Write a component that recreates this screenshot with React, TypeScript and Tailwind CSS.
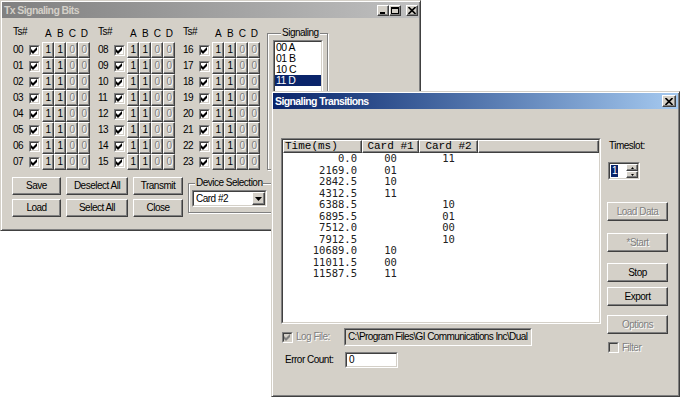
import React from "react";

const UI = "font-['Liberation_Sans',Arial,sans-serif] tracking-[-0.5px]";
const TITLE = "font-bold text-[10.5px] tracking-[-0.6px] leading-none";
const RAISED =
  "bg-[#d4d0c8] border border-t-white border-l-white border-r-[#404040] border-b-[#404040] shadow-[inset_-1px_-1px_0_#808080]";
const SUNKEN_OUT = "border border-t-[#808080] border-l-[#808080] border-r-white border-b-white";
const SUNKEN_IN = "border border-t-[#404040] border-l-[#404040] border-r-[#d4d0c8] border-b-[#d4d0c8]";
const ETCHED = "border border-[#808080] shadow-[inset_1px_1px_0_#fff,1px_1px_0_#fff]";
const DIS = "text-[#808080] [text-shadow:1px_1px_0_#fff]";
const WIN =
  "bg-[#d4d0c8] border border-t-[#d4d0c8] border-l-[#d4d0c8] border-r-[#404040] border-b-[#404040] shadow-[inset_1px_1px_0_#fff,inset_-1px_-1px_0_#808080] p-[1px]";

function Field({
  className,
  bg = "bg-white",
  children,
}: {
  className: string;
  bg?: string;
  children?: React.ReactNode;
}) {
  return (
    <div className={`${SUNKEN_OUT} ${className} shrink-0`}>
      <div className={`${SUNKEN_IN} ${bg} w-full h-full flex items-center overflow-hidden`}>{children}</div>
    </div>
  );
}

function Check({ checked = true, disabled = false }: { checked?: boolean; disabled?: boolean }) {
  return (
    <Field className="w-[11px] h-[11px]" bg={disabled ? "bg-[#d4d0c8]" : "bg-white"}>
      {checked && (
        <svg width="7" height="7" viewBox="0 0 7 7" className="mx-auto">
          <path d="M0 2 L2 4 L6 0 L6 3 L2 7 L0 5 Z" fill={disabled ? "#808080" : "#000"} />
        </svg>
      )}
    </Field>
  );
}

function Btn({
  children,
  className,
  disabled = false,
}: {
  children: React.ReactNode;
  className: string;
  disabled?: boolean;
}) {
  return (
    <div
      className={`${RAISED} ${className} flex items-center justify-center leading-none shrink-0 whitespace-nowrap ${
        disabled ? DIS : "text-black"
      }`}
    >
      {children}
    </div>
  );
}

function CapBtn({ kind, w = "w-[12px]", h = "h-[11px]" }: { kind: "min" | "max" | "close"; w?: string; h?: string }) {
  return (
    <div className={`${RAISED} ${w} ${h} flex items-center justify-center shrink-0`}>
      {kind === "min" && (
        <svg width="8" height="7" viewBox="0 0 8 7">
          <rect x="1" y="5" width="5" height="2" fill="#000" />
        </svg>
      )}
      {kind === "max" && (
        <svg width="8" height="7" viewBox="0 0 8 7">
          <rect x="0.5" y="0.5" width="7" height="6" fill="none" stroke="#000" />
          <rect x="0" y="0" width="8" height="2" fill="#000" />
        </svg>
      )}
      {kind === "close" && (
        <svg width="8" height="7" viewBox="0 0 8 7">
          <path d="M0.5 0 L7.5 7 M7.5 0 L0.5 7" stroke="#000" strokeWidth="1.6" />
        </svg>
      )}
    </div>
  );
}

function TsGroup({ start, width }: { start: number; width: string }) {
  const rows = Array.from({ length: 8 }, (_, i) => String(start + i).padStart(2, "0"));
  return (
    <div className={`${width} flex flex-col`}>
      <div className="h-[18px] flex">
        <span className="w-[16px] leading-[12px] mt-[2px]">Ts#</span>
        <div className="ml-[13px] flex mt-[4px] leading-[12px]">
          {["A", "B", "C", "D"].map((l) => (
            <span key={l} className="w-[12px] text-center">
              {l}
            </span>
          ))}
        </div>
      </div>
      {rows.map((r) => (
        <div key={r} className="h-[16px] flex items-center">
          <span className="w-[16px] leading-none">{r}</span>
          <Check />
          <div className="ml-[2px] flex">
            <Btn className="w-[12px] h-[16px]">1</Btn>
            <Btn className="w-[12px] h-[16px]">1</Btn>
            <Btn className="w-[12px] h-[16px]" disabled>
              0
            </Btn>
            <Btn className="w-[12px] h-[16px]" disabled>
              0
            </Btn>
          </div>
        </div>
      ))}
    </div>
  );
}

function TxWindow() {
  return (
    <div className={`absolute left-0 top-0 w-[421px] h-[231px] ${WIN} ${UI} text-[10px] text-black flex flex-col`}>
      <div className="h-[16px] shrink-0 flex items-center bg-linear-to-r from-[#808080] to-[#c0c0c0] pl-[2px]">
        <span className={`${TITLE} text-[#d4d0c8]`}>Tx Signaling Bits</span>
        <div className="ml-auto flex items-center mr-[1px]">
          <CapBtn kind="min" />
          <CapBtn kind="max" />
          <div className="w-[5px]" />
          <CapBtn kind="close" />
        </div>
      </div>
      <div className="flex">
        <div className="flex pl-[11px] pt-[6px]">
          <TsGroup start={0} width="w-[85px]" />
          <TsGroup start={8} width="w-[85px]" />
          <TsGroup start={16} width="w-[78px]" />
        </div>
        <div className={`relative ml-[6px] mt-[15px] w-[61px] h-[137px] ${ETCHED}`}>
          <span className="absolute left-[13px] -top-[7px] px-[1px] bg-[#d4d0c8] leading-[12px]">Signaling</span>
          <Field className="ml-[5px] mt-[6px] w-[50px] h-[140px]">
            <div className="self-start w-full flex flex-col leading-[11px] text-[10.5px]">
              <span className="h-[11px] pl-[1px]">00 A</span>
              <span className="h-[11px] pl-[1px]">01 B</span>
              <span className="h-[11px] pl-[1px]">10 C</span>
              <span className="h-[11px] pl-[1px] bg-[#0a246a] text-white">11 D</span>
            </div>
          </Field>
        </div>
      </div>
      <div className="flex pl-[10px] mt-[7px]">
        <div className="grid grid-cols-[49px_62px_50px] gap-x-[5px] gap-y-[4px]">
          <Btn className="h-[18px]">Save</Btn>
          <Btn className="h-[18px]">Deselect All</Btn>
          <Btn className="h-[18px]">Transmit</Btn>
          <Btn className="h-[18px]">Load</Btn>
          <Btn className="h-[18px]">Select All</Btn>
          <Btn className="h-[18px]">Close</Btn>
        </div>
        <div className={`relative ml-[5px] mt-[6px] w-[100px] h-[30px] ${ETCHED}`}>
          <span className="absolute left-[6px] -top-[7px] px-[1px] bg-[#d4d0c8] leading-[12px] whitespace-nowrap">
            Device Selection
          </span>
          <Field className="ml-[3px] mt-[6px] w-[75px] h-[17px]">
            <span className="pl-[2px] leading-none">Card #2</span>
            <div className={`ml-auto ${RAISED} w-[13px] h-full flex items-center justify-center`}>
              <svg width="7" height="4" viewBox="0 0 7 4">
                <path d="M0 0 H7 L3.5 4 Z" fill="#000" />
              </svg>
            </div>
          </Field>
        </div>
      </div>
    </div>
  );
}

const DATA: [string, string, string][] = [
  ["0.0", "00", "11"],
  ["2169.0", "01", ""],
  ["2842.5", "10", ""],
  ["4312.5", "11", ""],
  ["6388.5", "", "10"],
  ["6895.5", "", "01"],
  ["7512.0", "", "00"],
  ["7912.5", "", "10"],
  ["10689.0", "10", ""],
  ["11011.5", "00", ""],
  ["11587.5", "11", ""],
];

function TransitionsWindow() {
  return (
    <div
      className={`absolute left-[271px] top-[91px] w-[409px] h-[306px] ${WIN} ${UI} text-[10px] text-black flex flex-col`}
    >
      <div className="h-[16px] shrink-0 flex items-center bg-linear-to-r from-[#0a246a] to-[#a6caf0] pl-[2px]">
        <span className={`${TITLE} text-white`}>Signaling Transitions</span>
        <div className="ml-auto mr-[2px]">
          <CapBtn kind="close" w="w-[14px]" h="h-[12px]" />
        </div>
      </div>
      <div className="flex">
        <div className="flex flex-col pl-[8px] pt-[29px]">
          <Field className="w-[320px] h-[186px]">
            <div className="self-start w-full flex flex-col">
              <div className="flex h-[13px] font-['Liberation_Mono',monospace] tracking-normal text-[11px] leading-none">
                <div className={`${RAISED} w-[79px] h-full flex items-center pl-[1px]`}>Time(ms)</div>
                <div className={`${RAISED} w-[57px] h-full flex items-center justify-center`}>Card #1</div>
                <div className={`${RAISED} w-[59px] h-full flex items-center justify-center`}>Card #2</div>
                <div className={`${RAISED} flex-1 h-full`} />
              </div>
              <div className="flex flex-col font-['DejaVu_Sans_Mono',monospace] tracking-normal text-[10.5px] text-[#222]">
                {DATA.map(([t, a, b]) => (
                  <div key={t} className="flex h-[11.5px] leading-[11.5px]">
                    <span className="w-[79px] text-right pr-[5px]">{t}</span>
                    <span className="w-[57px] text-center">{a}</span>
                    <span className="w-[59px] text-center">{b}</span>
                  </div>
                ))}
              </div>
            </div>
          </Field>
          <div className="flex items-center h-[18px] mt-[4px]">
            <div className="ml-[1px]">
              <Check disabled />
            </div>
            <span className={`ml-[3px] w-[48px] leading-none ${DIS}`}>Log File:</span>
            <Field className="w-[188px] h-[18px]" bg="bg-[#d4d0c8]">
              <span className="pl-[2px] leading-none whitespace-nowrap tracking-[-0.6px]">
                C:\Program Files\GI Communications Inc\Dual
              </span>
            </Field>
          </div>
          <div className="flex items-center h-[16px] mt-[6px]">
            <span className="ml-[4px] w-[60px] leading-none">Error Count:</span>
            <Field className="w-[53px] h-[16px]">
              <span className="pl-[2px] leading-none">0</span>
            </Field>
          </div>
        </div>
        <div className="flex flex-col ml-[6px] pt-[31px]">
          <span className="ml-[2px] leading-[12px]">Timeslot:</span>
          <Field className="ml-[1px] mt-[10px] w-[32px] h-[18px]">
            <span className="ml-[1px] px-[1px] bg-[#0a246a] text-white leading-[12px]">1</span>
            <div className="ml-auto flex flex-col h-full">
              <div className={`${RAISED} w-[12px] h-1/2 flex items-center justify-center`}>
                <svg width="3" height="2" viewBox="0 0 3 2">
                  <path d="M0 2 H3 L1.5 0 Z" fill="#000" />
                </svg>
              </div>
              <div className={`${RAISED} w-[12px] h-1/2 flex items-center justify-center`}>
                <svg width="3" height="2" viewBox="0 0 3 2">
                  <path d="M0 0 H3 L1.5 2 Z" fill="#000" />
                </svg>
              </div>
            </div>
          </Field>
          <Btn className="mt-[22px] w-[61px] h-[19px]" disabled>
            Load Data
          </Btn>
          <Btn className="mt-[12px] w-[61px] h-[19px]" disabled>
            *Start
          </Btn>
          <Btn className="mt-[11px] w-[61px] h-[19px]">Stop</Btn>
          <Btn className="mt-[5px] w-[61px] h-[19px]">Export</Btn>
          <Btn className="mt-[9px] w-[61px] h-[19px]" disabled>
            Options
          </Btn>
          <div className="mt-[8px] flex items-center">
            <div className="ml-[1px]">
              <Check checked={false} disabled />
            </div>
            <span className={`ml-[3px] leading-none ${DIS}`}>Filter</span>
          </div>
        </div>
      </div>
    </div>
  );
}

export default function App() {
  return (
    <div className="relative w-[680px] h-[397px] bg-white overflow-hidden">
      <TxWindow />
      <TransitionsWindow />
    </div>
  );
}
